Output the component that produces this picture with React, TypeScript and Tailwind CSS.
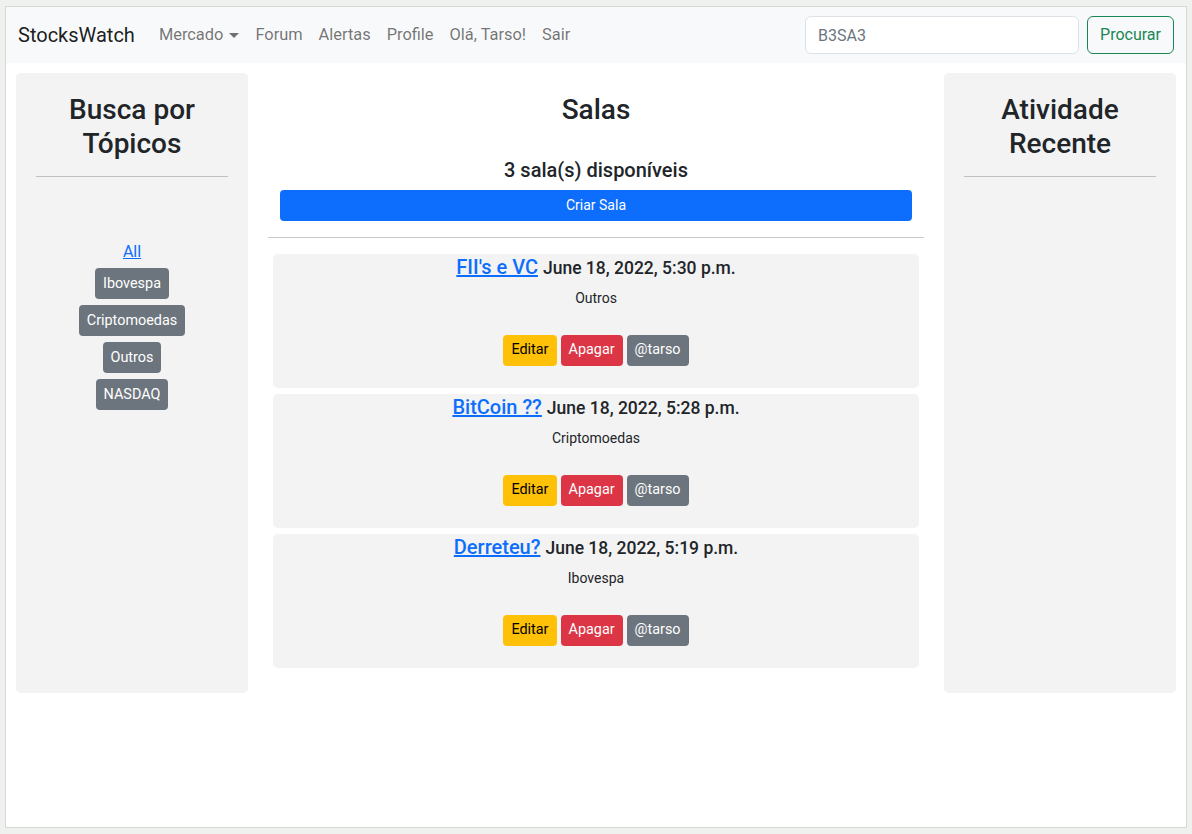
import React from "react";

const rooms = [
  { name: "FII's e VC", date: "June 18, 2022, 5:30 p.m.", topic: "Outros" },
  { name: "BitCoin ??", date: "June 18, 2022, 5:28 p.m.", topic: "Criptomoedas" },
  { name: "Derreteu?", date: "June 18, 2022, 5:19 p.m.", topic: "Ibovespa" },
];

const topics = ["Ibovespa", "Criptomoedas", "Outros", "NASDAQ"];

const Navbar: React.FC = () => (
  <nav className="flex h-[56px] items-center bg-[#f8f9fa] px-3">
    <a href="#" className="mr-4 text-[20px] leading-[30px] text-black/90">
      StocksWatch
    </a>
    <ul className="flex items-center text-[16.4px] leading-6 text-black/55">
      <li className="px-2">
        <a href="#" className="inline-flex items-center">
          Mercado
          <span className="ml-[6px] inline-block h-0 w-0 border-x-[5px] border-t-[5px] border-x-transparent border-t-black/55" />
        </a>
      </li>
      <li className="px-2">Forum</li>
      <li className="px-2">Alertas</li>
      <li className="px-2">Profile</li>
      <li className="px-2">Olá, Tarso!</li>
      <li className="px-2">Sair</li>
    </ul>
    <form className="ml-auto flex items-center gap-2">
      <input
        type="search"
        placeholder="B3SA3"
        className="h-[38px] w-[274px] rounded-md border border-[#dee2e6] bg-white px-3 text-[16px] text-[#212529] placeholder:text-[#6c757d] focus:outline-none"
      />
      <button
        type="button"
        className="h-[38px] rounded-md border border-[#198754] px-3 text-[16px] text-[#198754]"
      >
        Procurar
      </button>
    </form>
  </nav>
);

const SideCard: React.FC<{ title: React.ReactNode; children?: React.ReactNode }> = ({
  title,
  children,
}) => (
  <div className="flex h-[620px] w-[232px] flex-col rounded-[5px] bg-[#f3f3f3] p-5 text-center">
    <h3 className="text-[28px] font-medium leading-[1.2] text-[#212529]">{title}</h3>
    <hr className="my-4 border-t border-[#212529]/25" />
    {children}
  </div>
);

const RoomCard: React.FC<{ name: string; date: string; topic: string }> = ({
  name,
  date,
  topic,
}) => (
  <div className="rounded-[5px] bg-[#f3f3f3] pt-[1px] pb-[22px] text-center">
    <h5 className="text-[20px] font-medium leading-6 text-[#212529]">
      <a href="#" className="text-[#0d6efd] underline">
        {name}
      </a>{" "}
      <small className="text-[17.5px]">{date}</small>
    </h5>
    <p className="mt-2 text-[14px] leading-[21px] text-[#212529]">{topic}</p>
    <div className="mt-[26px] flex justify-center gap-1 text-[14.4px]">
      <button className="h-[31px] rounded bg-[#ffc107] px-2 text-black">Editar</button>
      <button className="h-[31px] rounded bg-[#dc3545] px-2 text-white">Apagar</button>
      <button className="h-[31px] rounded bg-[#6c757d] px-2 text-white">@tarso</button>
    </div>
  </div>
);

export default function App() {
  return (
    <div
      className="h-[834px] bg-[#eff1ef] px-[5px] pt-[6px] pb-[6px]"
      style={{ fontFamily: "Roboto, 'Noto Sans', sans-serif" }}
    >
      <div className="h-full border border-[#d6d8d6] bg-white">
        <Navbar />
        <main className="flex gap-5 px-[10px] pt-[10px]">
          <SideCard
            title={
              <>
                Busca por
                <br />
                Tópicos
              </>
            }
          >
            <div className="mt-[47px] flex flex-col items-center">
              <a href="#" className="text-[16px] leading-6 text-[#0d6efd] underline">
                All
              </a>
              <div className="mt-1 flex flex-col items-center gap-[6px]">
                {topics.map((t) => (
                  <button
                    key={t}
                    className="h-[31px] rounded bg-[#6c757d] px-2 text-[14.4px] text-white"
                  >
                    {t}
                  </button>
                ))}
              </div>
            </div>
          </SideCard>

          <section className="flex-1">
            <div className="px-3 pt-5 text-center">
              <h3 className="text-[28px] font-medium leading-[1.2] text-[#212529]">Salas</h3>
              <h5 className="mt-[31px] text-[20px] font-medium leading-6 text-[#212529]">
                3 sala(s) disponíveis
              </h5>
              <button className="mt-2 block h-[31px] w-full rounded bg-[#0d6efd] text-[14px] text-white">
                Criar Sala
              </button>
            </div>
            <hr className="my-4 border-t border-[#212529]/25" />
            <div className="flex flex-col gap-[6px] px-[5px]">
              {rooms.map((r) => (
                <RoomCard key={r.name} {...r} />
              ))}
            </div>
          </section>

          <SideCard
            title={
              <>
                Atividade
                <br />
                Recente
              </>
            }
          />
        </main>
      </div>
    </div>
  );
}
